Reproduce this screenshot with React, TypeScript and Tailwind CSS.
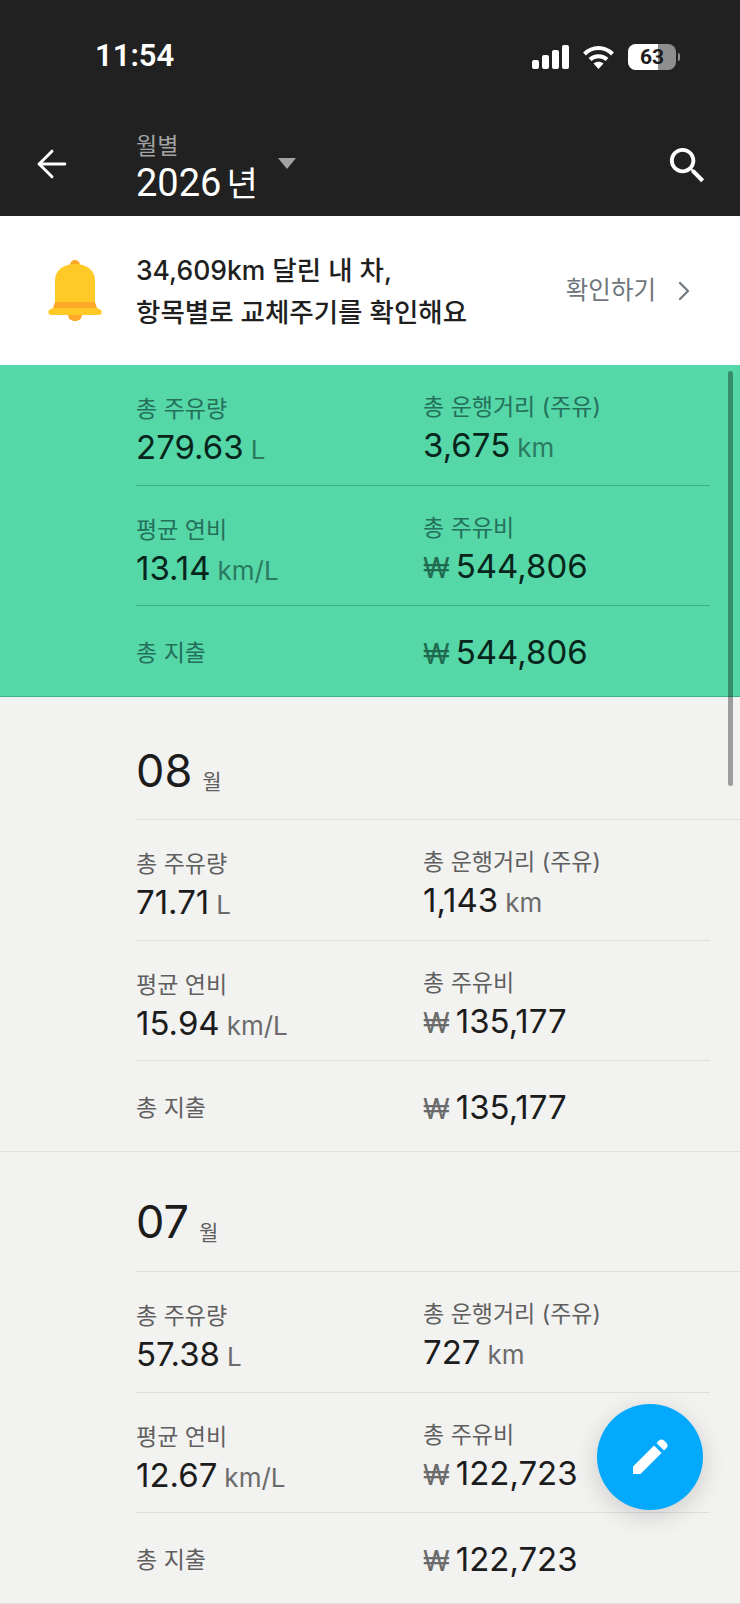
import { ArrowLeft, ChevronRight } from 'lucide-react';

const KR = "font-['Inter','Noto_Sans_CJK_KR',sans-serif]";

interface StatsData {
  fuel: string;
  distance: string;
  efficiency: string;
  cost: string;
}

function Won({ green }: { green?: boolean }) {
  return (
    <span className={`mr-[6px] text-[28px] ${green ? 'text-[#1f6b50]' : 'text-[#6b6b6b]'}`}>₩</span>
  );
}

function Stat({ label, value, unit, green, low }: { label: string; value: string; unit?: string; green?: boolean; low?: boolean }) {
  return (
    <div className={low ? 'pt-[2px]' : ''}>
      <div className={`text-[23px] leading-[30px] ${green ? 'text-[#24705a]' : 'text-[#5f5f5f]'}`}>{label}</div>
      <div className={`pt-[2px] text-[33px] leading-[42px] ${green ? 'text-[#07251b]' : 'text-[#1c1c1c]'}`}>
        {value}
        {unit && <span className={`ml-[7px] text-[26px] ${green ? 'text-[#2b7a62]' : 'text-[#6b6b6b]'}`}>{unit}</span>}
      </div>
    </div>
  );
}

function Stats({ data, green }: { data: StatsData; green?: boolean }) {
  const line = green ? 'border-[#3fae8a]' : 'border-[#dededc]';
  return (
    <div className="mr-[30px] ml-[136px]">
      <div className={`grid h-[121px] grid-cols-[287px_1fr] border-b pt-[27px] ${line}`}>
        <Stat label="총 주유량" value={data.fuel} unit="L" green={green} low />
        <Stat label="총 운행거리 (주유)" value={data.distance} unit="km" green={green} />
      </div>
      <div className={`grid h-[120px] grid-cols-[287px_1fr] border-b pt-[27px] ${line}`}>
        <Stat label="평균 연비" value={data.efficiency} unit="km/L" green={green} low />
        <div>
          <div className={`text-[23px] leading-[30px] ${green ? 'text-[#24705a]' : 'text-[#5f5f5f]'}`}>총 주유비</div>
          <div className={`pt-[2px] text-[33px] leading-[42px] ${green ? 'text-[#07251b]' : 'text-[#1c1c1c]'}`}>
            <Won green={green} />
            {data.cost}
          </div>
        </div>
      </div>
      <div className="grid h-[90px] grid-cols-[287px_1fr] items-center">
        <div className={`pt-[4px] text-[23px] ${green ? 'text-[#24705a]' : 'text-[#5f5f5f]'}`}>총 지출</div>
        <div className={`pt-[4px] text-[33px] leading-[42px] ${green ? 'text-[#07251b]' : 'text-[#1c1c1c]'}`}>
          <Won green={green} />
          {data.cost}
        </div>
      </div>
    </div>
  );
}

function MonthSection({ month, data, first }: { month: string; data: StatsData; first?: boolean }) {
  return (
    <section className="border-b border-[#e2e2e0]">
      <div className={`ml-[136px] flex items-baseline border-b border-[#dededc] ${first ? 'h-[123px] pt-[44px]' : 'h-[120px] pt-[40px]'}`}>
        <span className="text-[45px] leading-[60px] text-[#1c1c1c]">{month}</span>
        <span className="ml-[10px] translate-y-[2px] text-[21px] text-[#5f5f5f]">월</span>
      </div>
      <Stats data={data} />
    </section>
  );
}

export default function App() {
  return (
    <div className={`relative h-[1604px] w-[740px] overflow-hidden bg-[#f2f2f1] ${KR}`}>
      {/* Status bar + toolbar */}
      <header className="h-[216px] bg-[#212121] text-white">
        <div className="flex h-[122px] items-start justify-between pt-[36px] pr-[60px] pl-[95px]">
          <span className="font-['Roboto'] text-[31px] leading-[40px] font-semibold">11:54</span>
          <div className="flex items-center gap-[13px] pt-[8px]">
            <svg width="37" height="24" viewBox="0 0 37 24" fill="white">
              <rect x="0" y="15" width="7" height="9" rx="2" />
              <rect x="10" y="10" width="7" height="14" rx="2" />
              <rect x="20" y="5" width="7" height="19" rx="2" />
              <rect x="30" y="0" width="7" height="24" rx="2" />
            </svg>
            <svg width="33" height="25" viewBox="0 0 32 25" fill="none" stroke="white" strokeWidth="4">
              <path d="M2 9 C10 1 22 1 30 9" />
              <path d="M7.5 14.5 C12 10 20 10 24.5 14.5" />
              <path d="M16 24 L11 18.5 C14 16 18 16 21 18.5 Z" fill="white" stroke="none" />
            </svg>
            <div className="flex items-center">
              <div className="relative flex h-[26px] w-[48px] items-center justify-center overflow-hidden rounded-[8px] bg-[#8e8e8e]">
                <div className="absolute inset-y-0 left-0 w-[30px] bg-white" />
                <span className="relative font-['Roboto'] text-[21px] leading-none font-bold text-[#1b1b1b]">63</span>
              </div>
              <div className="ml-[2px] h-[8px] w-[2px] rounded-r-full bg-[#8e8e8e]" />
            </div>
          </div>
        </div>
        <div className="flex h-[94px] items-start">
          <ArrowLeft className="mt-[20px] ml-[30px] h-[44px] w-[44px]" strokeWidth={1.6} />
          <div className="ml-[62px] pt-[10px] font-['Roboto','Noto_Sans_CJK_KR',sans-serif] leading-none">
            <div className="text-[23px] leading-[30px] text-[#a3a3a3]">월별</div>
            <div className="text-[38px] leading-[42px]">
              2026<span className="ml-[5px] text-[34px]">년</span>
            </div>
          </div>
          <div className="mt-[36px] ml-[20px] h-0 w-0 border-x-[9px] border-t-[11px] border-x-transparent border-t-[#a3a3a3]" />
          <svg className="mt-[20px] mr-[29px] ml-auto" width="47" height="47" viewBox="0 0 24 24" fill="white">
            <path d="M15.5 14h-.79l-.28-.27C15.41 12.59 16 11.11 16 9.5 16 5.91 13.09 3 9.5 3S3 5.91 3 9.5 5.91 16 9.5 16c1.61 0 3.09-.59 4.23-1.57l.27.28v.79l5 4.99L20.49 19l-4.99-5zm-6 0C7.01 14 5 11.99 5 9.5S7.01 5 9.5 5 14 7.01 14 9.5 11.99 14 9.5 14z" />
          </svg>
        </div>
      </header>

      {/* Reminder banner */}
      <div className="flex h-[149px] items-center bg-white">
        <svg className="ml-[48px]" width="54" height="62" viewBox="0 0 54 62">
          <circle cx="27" cy="5" r="5" fill="#ffa726" />
          <path d="M7 42 V20 C7 10 16 4 27 4 C38 4 47 10 47 20 V42 Z" fill="#ffca28" />
          <path d="M20 54 H34 C34 59 31 61 27 61 C23 61 20 59 20 54 Z" fill="#ffa726" />
          <path d="M7 42 H47 L49 48 H5 Z" fill="#ffa726" />
          <path d="M5 48 H49 L53 50 C54.5 52 53.5 55 51 55 H3 C0.5 55 -0.5 52 1 50 Z" fill="#ffca28" />
        </svg>
        <div className="ml-[34px] text-[26.5px] leading-[42px] font-medium text-[#1f1f1f]">
          <div>34,609km 달린 내 차,</div>
          <div>항목별로 교체주기를 확인해요</div>
        </div>
        <div className="mr-[40px] ml-auto flex items-center text-[24.5px] text-[#6f767c]">
          확인하기
          <ChevronRight className="ml-[12px] h-[32px] w-[32px]" strokeWidth={1.6} />
        </div>
      </div>

      {/* Year totals */}
      <div className="h-[332px] border-b border-[#3fae8a] bg-[#55d7a8]">
        <Stats green data={{ fuel: '279.63', distance: '3,675', efficiency: '13.14', cost: '544,806' }} />
      </div>

      <MonthSection first month="08" data={{ fuel: '71.71', distance: '1,143', efficiency: '15.94', cost: '135,177' }} />
      <MonthSection month="07" data={{ fuel: '57.38', distance: '727', efficiency: '12.67', cost: '122,723' }} />

      {/* Scrollbar */}
      <div className="absolute top-[371px] left-[728px] h-[415px] w-[5px] rounded-full bg-black/35" />

      {/* Write button */}
      <button className="absolute top-[1404px] left-[597px] flex h-[106px] w-[106px] items-center justify-center rounded-full bg-[#03a9fc] shadow-[0_6px_24px_rgba(0,0,0,0.16)]">
        <svg width="36" height="36" viewBox="0 0 36 36" fill="white">
          <path d="M1 27.5 L22 6.5 L29.5 14 L8.5 35 L1 35 Z" />
          <path d="M24.5 4 L27 1.5 C28.5 0 30.5 0 32 1.5 L34.5 4 C36 5.5 36 7.5 34.5 9 L32 11.5 Z" />
        </svg>
      </button>
    </div>
  );
}
